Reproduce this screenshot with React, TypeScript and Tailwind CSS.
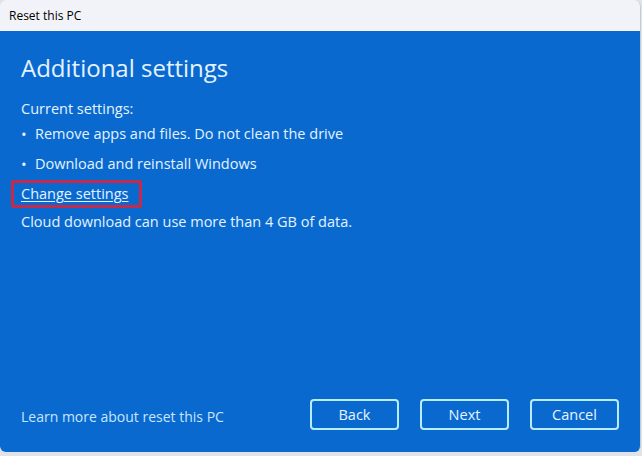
import React from 'react';

const font = { fontFamily: '"Open Sans", "Noto Sans", sans-serif' };

export default function App() {
  const bullets = ['Remove apps and files. Do not clean the drive', 'Download and reinstall Windows'];

  return (
    <div className="w-[642px] h-[456px] bg-[#dfe3ea] overflow-hidden" style={font}>
      <div className="w-[641px] h-[452px] flex flex-col rounded-t-[7px] rounded-b-[6px] overflow-hidden border-r border-[#c4ccd8]">
        {/* Title bar */}
        <div className="h-[31px] shrink-0 bg-[#f1f3f8] flex items-center px-[9px] text-[12px] text-black">
          Reset this PC
        </div>

        {/* Content */}
        <div className="flex-1 bg-[#0a69cf] flex flex-col px-[21px] text-[#e3f3ff]">
          <h1 className="text-[24px] leading-[32px] mt-[21px]">Additional settings</h1>

          <div className="mt-[15px] text-[14.5px] leading-[20px]">Current settings:</div>
          <ul className="mt-[5px] flex flex-col gap-[10px] text-[14.5px] leading-[20px]">
            {bullets.map((b) => (
              <li key={b} className="flex items-center">
                <span className="w-[14px] text-[15px] leading-[20px]">•</span>
                {b}
              </li>
            ))}
          </ul>

          <div className="mt-[6px] -ml-[10px] w-[131px] h-[28px] border-[3px] border-[#c42a4c] rounded-[2px] flex items-center pl-[7px]">
            <span className="underline underline-offset-2 text-[14.5px] leading-[20px]">Change settings</span>
          </div>
          <div className="mt-[4px] text-[14.5px] leading-[20px]">Cloud download can use more than 4 GB of data.</div>

          <div className="mt-auto mb-[22px] flex items-center">
            <span className="text-[14px] text-[#c6e6ff] flex-1 pt-[3px]">Learn more about reset this PC</span>
            <div className="flex gap-[21px]">
              {['Back', 'Next', 'Cancel'].map((l) => (
                <button
                  key={l}
                  className="w-[89px] h-[31px] rounded-[4px] border-2 border-[#b8ecff] text-[14.5px] text-[#e6f5ff] flex items-center justify-center"
                >
                  {l}
                </button>
              ))}
            </div>
          </div>
        </div>
      </div>
    </div>
  );
}
